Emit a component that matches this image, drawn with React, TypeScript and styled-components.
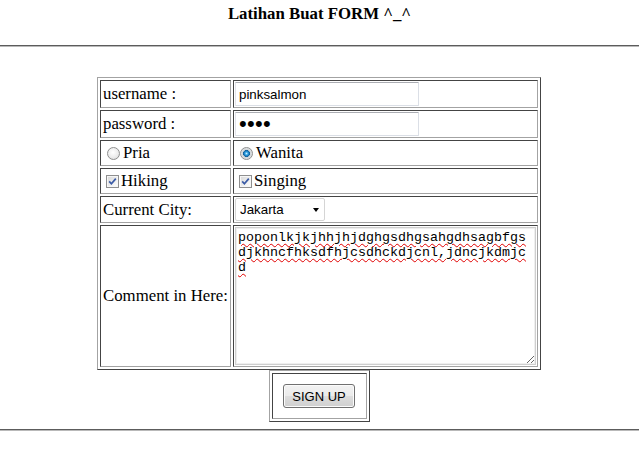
import React from "react";
import styled, { createGlobalStyle } from "styled-components";

const Global = createGlobalStyle`
  html, body { margin: 0; padding: 0; background: #fff; }
  body {
    font-family: "Liberation Serif", "Times New Roman", serif;
    font-size: 16.8px;
    color: #000;
  }
`;

const Header = styled.h3`
  margin: 0;
  height: 45px;
  box-sizing: border-box;
  padding-top: 4px;
  text-align: center;
  font-size: 16.8px;
  font-weight: bold;
  line-height: 19px;
`;

const Rule = styled.hr<{ $top?: number }>`
  margin: ${(p) => p.$top ?? 0}px 0 0;
  height: 0;
  border: 0;
  border-top: 1px solid #5c5c5c;
  border-bottom: 1px solid #b9b9b9;
`;

const Form = styled.form`
  margin: 0;
  padding-right: 1px;
`;

const GridTable = styled.table<{ $top: number; $w: number }>`
  margin: ${(p) => p.$top}px auto 0;
  width: ${(p) => p.$w}px;
  table-layout: fixed;
  border-collapse: separate;
  border-spacing: 2px;
  border: 1px solid;
  border-color: #a3a3a3 #444 #444 #a3a3a3;
`;

const Cell = styled.td<{ $w?: number; $h: number; $pl?: number; $center?: boolean }>`
  box-sizing: border-box;
  ${(p) => (p.$w ? `width: ${p.$w}px;` : "")}
  height: ${(p) => p.$h}px;
  padding: 1px 1px 1px ${(p) => p.$pl ?? 1}px;
  border: 1px solid;
  border-color: #444 #a3a3a3 #a3a3a3 #444;
  vertical-align: middle;
  text-align: ${(p) => (p.$center ? "center" : "left")};
  white-space: nowrap;
`;

const TextInput = styled.input<{ $big?: boolean }>`
  display: block;
  box-sizing: border-box;
  width: 184px;
  height: 24px;
  margin: 0;
  padding: 0 3px;
  border: 1px solid #dbdfe6;
  border-top-color: #abadb3;
  border-left-color: #e2e3ea;
  border-radius: 1px;
  font-family: "Liberation Sans", Arial, sans-serif;
  font-size: ${(p) => (p.$big ? "22px" : "13.33px")};
  letter-spacing: ${(p) => (p.$big ? "0.3px" : "0")};
  color: #000;
  background: #fff;
  outline: none;
`;

const Choice = styled.label`
  display: flex;
  align-items: center;
  height: 22px;
`;

const Radio = styled.input.attrs({ type: "radio" })`
  appearance: none;
  box-sizing: border-box;
  width: 13px;
  height: 13px;
  margin: 0 3px 0 5px;
  border-radius: 50%;
  border: 1px solid #8e8f8f;
  background: radial-gradient(circle at 45% 40%, #ffffff 0%, #ececec 55%, #d2d2d2 100%);
  &:checked {
    background: radial-gradient(
      circle at 50% 50%,
      #c9f0ff 0px,
      #2d9fe2 1.6px,
      #10609c 3.2px,
      #cfd4d8 3.7px,
      #f2f2f2 100%
    );
  }
`;

const BoxWrap = styled.span`
  position: relative;
  display: inline-flex;
  margin: 0 2px 0 4px;
`;

const Box = styled.input.attrs({ type: "checkbox" })`
  appearance: none;
  box-sizing: border-box;
  width: 13px;
  height: 13px;
  margin: 0;
  border: 1px solid #8f8f8f;
  background: linear-gradient(135deg, #d6d6d6 0%, #f4f4f4 70%, #ffffff 100%);
  box-shadow: inset 0 0 0 1px #f6f6f6;
`;

const Tick = styled.svg`
  position: absolute;
  left: 0;
  top: 0;
  pointer-events: none;
`;

const SelectWrap = styled.span`
  position: relative;
  display: block;
  width: 90px;
  &::after {
    content: "";
    position: absolute;
    right: 6px;
    top: 10px;
    border-left: 3.5px solid transparent;
    border-right: 3.5px solid transparent;
    border-top: 4px solid #000;
    pointer-events: none;
  }
`;

const Select = styled.select`
  display: block;
  appearance: none;
  box-sizing: border-box;
  width: 90px;
  height: 23px;
  margin: 0;
  padding: 0 0 0 4px;
  border: 1px solid #d5d5d5;
  border-radius: 2px;
  background: #fff;
  font-family: "Liberation Sans", Arial, sans-serif;
  font-size: 13.33px;
  color: #000;
  outline: none;
`;

const Comment = styled.textarea`
  display: block;
  box-sizing: border-box;
  width: 301px;
  height: 138px;
  margin: 0;
  padding: 2px;
  border: 1px solid #cfcfcf;
  box-shadow: inset 0 0 0 1px #efefef;
  font-family: "Liberation Mono", "Courier New", monospace;
  font-size: 13.33px;
  line-height: 15px;
  color: #000;
  word-break: break-all;
  text-decoration: underline wavy #e00000;
  text-decoration-thickness: 1px;
  text-underline-offset: 2px;
  resize: both;
  outline: none;
  overflow: hidden;
`;

const Button = styled.button`
  box-sizing: border-box;
  width: 72px;
  height: 24px;
  margin: 0;
  padding: 0;
  border: 1px solid #707070;
  border-radius: 3px;
  background: linear-gradient(#f2f2f2 0%, #ebebeb 48%, #dddddd 52%, #cfcfcf 100%);
  box-shadow: inset 0 0 0 1px #fbfbfb;
  font-family: "Liberation Sans", Arial, sans-serif;
  font-size: 13px;
  color: #000;
  vertical-align: middle;
`;

function Check({ name, defaultChecked }: { name: string; defaultChecked?: boolean }) {
  return (
    <BoxWrap>
      <Box name={name} defaultChecked={defaultChecked} />
      {defaultChecked && (
        <Tick width="13" height="13" viewBox="0 0 13 13">
          <path d="M3.2 6.4 L5.4 8.8 L9.8 3.6" fill="none" stroke="#3b5ba6" strokeWidth="1.7" />
        </Tick>
      )}
    </BoxWrap>
  );
}

export default function App() {
  return (
    <>
      <Global />
      <Header>Latihan Buat FORM ^_^</Header>
      <Rule />
      <Form onSubmit={(e) => e.preventDefault()}>
        <GridTable $top={30} $w={444}>
          <tbody>
            <tr>
              <Cell $w={131} $h={28} $pl={2}>username :</Cell>
              <Cell $w={305} $h={28}>
                <TextInput type="text" defaultValue="pinksalmon" spellCheck={false} />
              </Cell>
            </tr>
            <tr>
              <Cell $h={28} $pl={2}>password :</Cell>
              <Cell $h={28}>
                <TextInput type="password" defaultValue="abcd" $big />
              </Cell>
            </tr>
            <tr>
              <Cell $h={26}>
                <Choice>
                  <Radio name="gender" value="pria" />
                  Pria
                </Choice>
              </Cell>
              <Cell $h={26}>
                <Choice>
                  <Radio name="gender" value="wanita" defaultChecked />
                  Wanita
                </Choice>
              </Cell>
            </tr>
            <tr>
              <Cell $h={26}>
                <Choice>
                  <Check name="hiking" defaultChecked />
                  Hiking
                </Choice>
              </Cell>
              <Cell $h={26}>
                <Choice>
                  <Check name="singing" defaultChecked />
                  Singing
                </Choice>
              </Cell>
            </tr>
            <tr>
              <Cell $h={26} $pl={2}>Current City:</Cell>
              <Cell $h={26}>
                <SelectWrap>
                  <Select defaultValue="Jakarta">
                    <option>Jakarta</option>
                    <option>Bandung</option>
                    <option>Surabaya</option>
                  </Select>
                </SelectWrap>
              </Cell>
            </tr>
            <tr>
              <Cell $h={142} $pl={2}>Comment in Here:</Cell>
              <Cell $h={142}>
                <Comment
                  spellCheck={false}
                  defaultValue="poponlkjkjhhjhjdghgsdhgsahgdhsagbfgsdjkhncfhksdfhjcsdhckdjcnl,jdncjkdmjcd"
                />
              </Cell>
            </tr>
          </tbody>
        </GridTable>
        <GridTable $top={0} $w={101}>
          <tbody>
            <tr>
              <Cell $h={46} $center>
                <Button type="submit">SIGN UP</Button>
              </Cell>
            </tr>
          </tbody>
        </GridTable>
      </Form>
      <Rule $top={7} />
    </>
  );
}
